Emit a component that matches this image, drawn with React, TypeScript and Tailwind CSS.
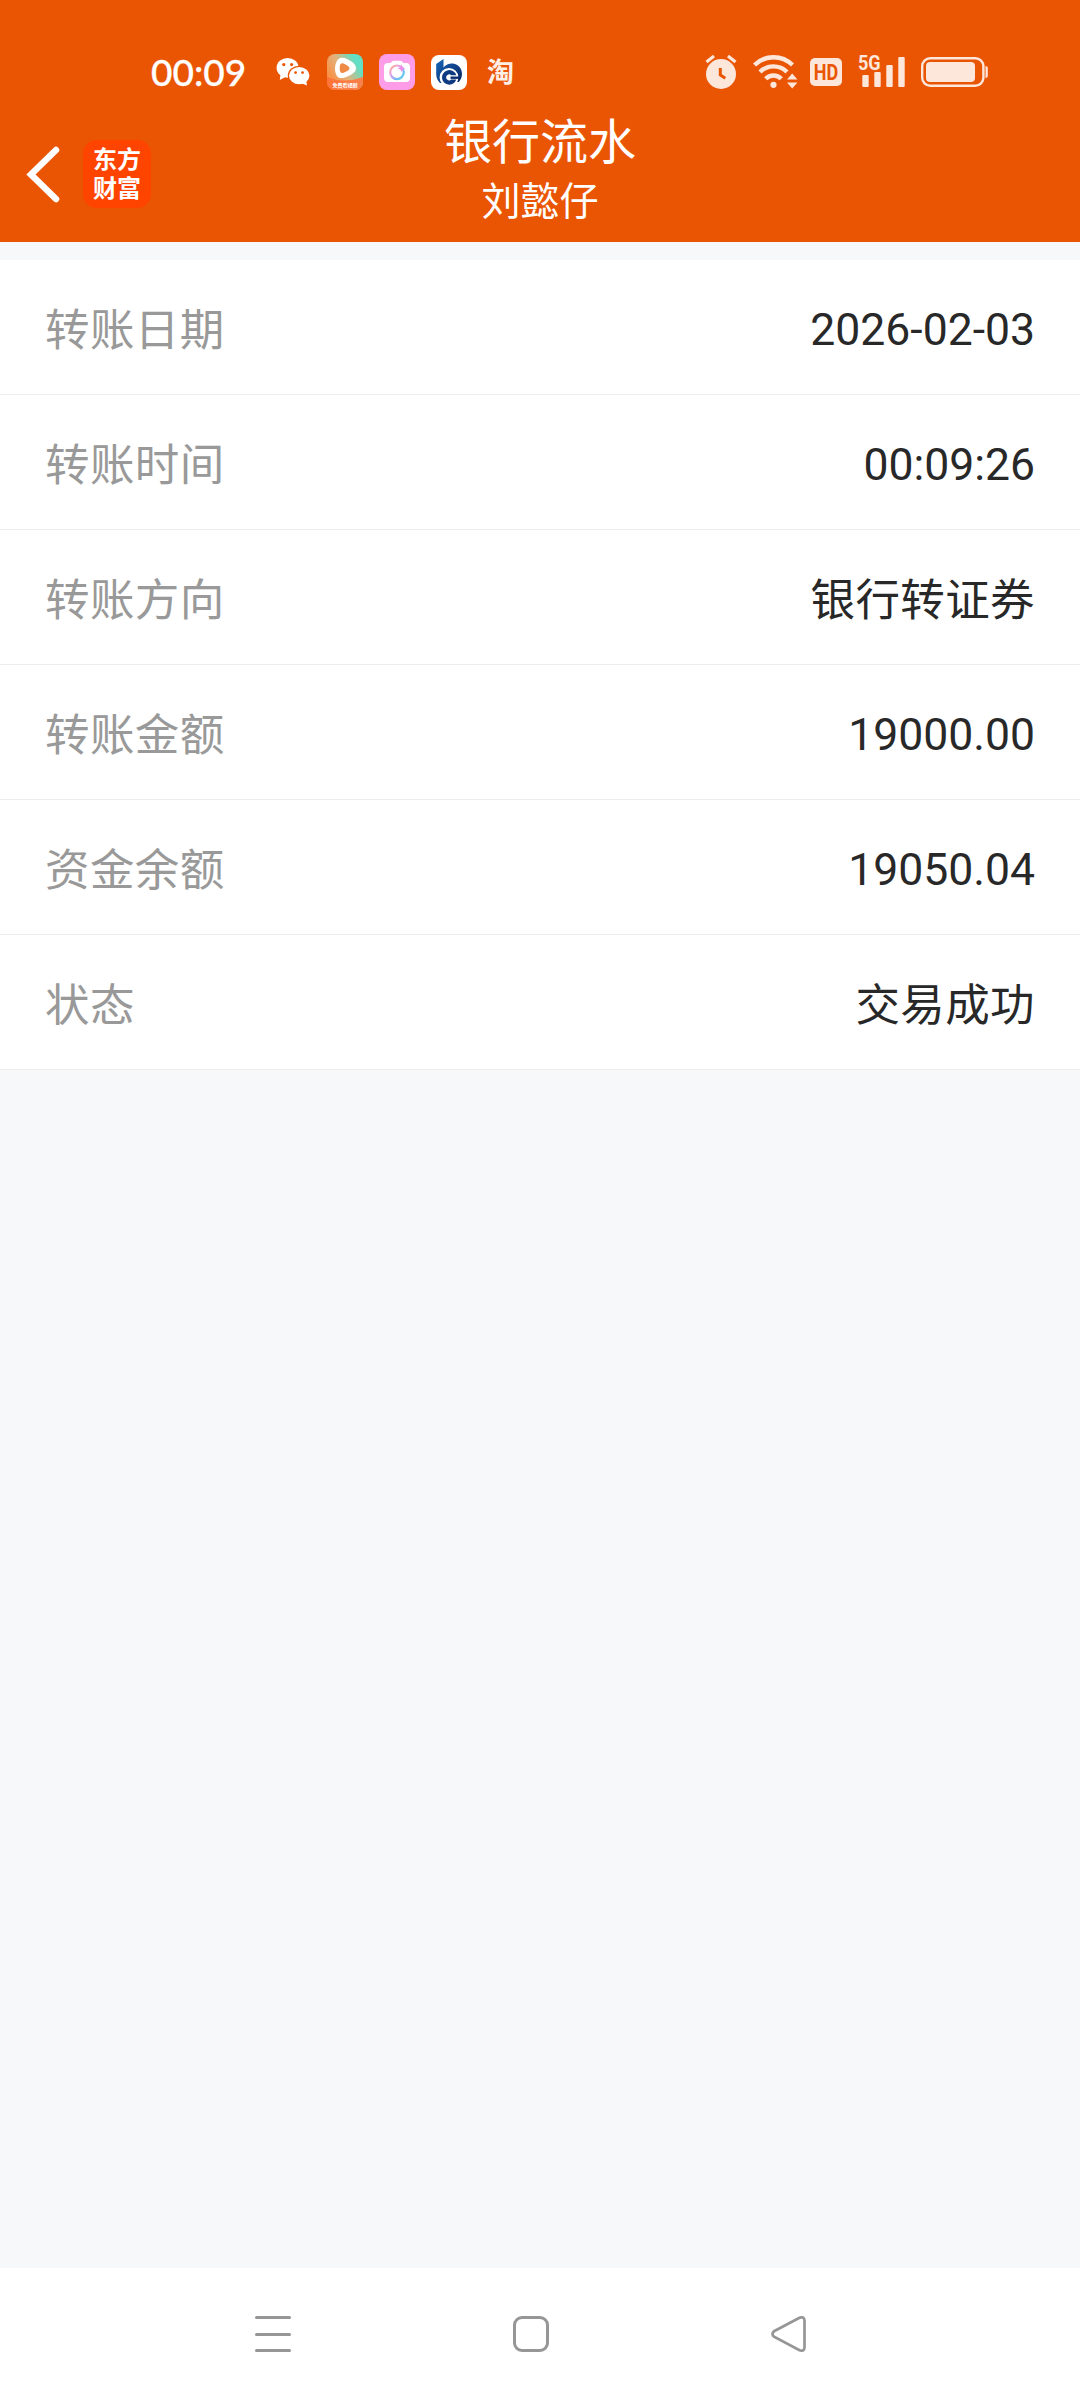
import type { ReactNode } from 'react'

const rows = [
  { label: '转账日期', value: '2026-02-03' },
  { label: '转账时间', value: '00:09:26' },
  { label: '转账方向', value: '银行转证券' },
  { label: '转账金额', value: '19000.00' },
  { label: '资金余额', value: '19050.04' },
  { label: '状态', value: '交易成功' },
]

function WechatIcon() {
  return (
    <svg width="34" height="30" viewBox="276 58 34 30" className="shrink-0">
      <path d="M280.500 75l-.7 6 6-3.200z" fill="#fff" />
      <ellipse cx="287.600" cy="68.800" rx="11" ry="9.900" fill="#fff" />
      <ellipse cx="299.200" cy="76.600" rx="11.400" ry="9.900" fill="#ea5504" />
      <path d="M301 84l6 2.400-.8-5z" fill="#fff" />
      <ellipse cx="299.200" cy="76.600" rx="10.200" ry="8.700" fill="#fff" />
      <g fill="#ea5504">
        <circle cx="283.800" cy="65.600" r="1.600" />
        <circle cx="291.600" cy="65.600" r="1.600" />
        <circle cx="295.600" cy="73.600" r="1.400" />
        <circle cx="302.600" cy="73.600" r="1.400" />
      </g>
    </svg>
  )
}

function VideoIcon() {
  return (
    <div className="relative h-9 w-9 shrink-0 overflow-hidden rounded-[8px]">
      <svg width="36" height="36" viewBox="0 0 36 36">
        <defs>
          <linearGradient id="videoBg" x1="0" y1="0.7" x2="1" y2="0.1">
            <stop offset="0" stopColor="#ff8a3c" />
            <stop offset="0.45" stopColor="#e2b27c" />
            <stop offset="0.8" stopColor="#62dfc4" />
          </linearGradient>
          <linearGradient id="videoFoot" x1="0" y1="0" x2="1" y2="0">
            <stop offset="0" stopColor="#ff7438" />
            <stop offset="1" stopColor="#f8804a" />
          </linearGradient>
        </defs>
        <rect width="36" height="36" fill="url(#videoBg)" />
        <path d="M0 23q18 7 36 0v13H0z" fill="url(#videoFoot)" />
        <path
          d="M10.500 6c2.500-3 6.500-2.500 10-.8 4.500 2.300 8.500 4.800 8.500 9 0 4-4 6-8 8-4.500 2.300-9.500 3-11.500-1-2.500-5-1.500-11.500 1-15.200z"
          fill="#fff"
        />
        <path
          d="M13.500 10c1-1.200 2.700-.9 4.500.2 2.500 1.500 4.700 2.600 4.500 4.400-.2 1.600-2.200 2.400-4.300 3.500-1.900 1-4 1.500-4.800 0-1-2-.9-6 .1-8.100z"
          fill="#ee8a45"
        />
      </svg>
      <span className="absolute inset-x-0 bottom-0.5 text-center text-[5px] leading-[6px] font-bold whitespace-nowrap text-white">
        免费看短剧
      </span>
    </div>
  )
}

function CameraIcon() {
  return (
    <svg width="36" height="36" viewBox="0 0 36 36" className="shrink-0">
      <defs>
        <linearGradient id="ring" x1="0" y1="0" x2="1" y2="1">
          <stop offset="0" stopColor="#ffb08a" />
          <stop offset="0.35" stopColor="#e9a0e8" />
          <stop offset="0.7" stopColor="#6fb6f5" />
          <stop offset="1" stopColor="#5fe0e0" />
        </linearGradient>
      </defs>
      <rect width="36" height="36" rx="8" fill="#fd9de8" />
      <path
        d="M9 9h2.500l1.500-1.500q.7-.7 1.700-.7h6.600q1 0 1.700.7L24.500 9H27q4 0 4 4v11q0 4-4 4H9q-4 0-4-4V13q0-4 4-4z"
        fill="#fff"
      />
      <circle cx="18" cy="18.300" r="6.800" fill="none" stroke="url(#ring)" strokeWidth="2.200" />
      <path d="M22.500 10.500l1.100 2.700 2.700 1.100-2.700 1.100-1.100 2.700-1.100-2.700-2.700-1.100 2.700-1.100z" fill="#f08ae6" />
    </svg>
  )
}

function BankIcon() {
  return (
    <svg width="36" height="36" viewBox="0 0 36 36" className="shrink-0">
      <defs>
        <linearGradient id="bank" x1="0" y1="0" x2="1" y2="1">
          <stop offset="0" stopColor="#1566b8" />
          <stop offset="1" stopColor="#0a2360" />
        </linearGradient>
      </defs>
      <rect y="1" width="36" height="35" rx="8" fill="#fff" />
      <path
        d="M5.200 10L12.500 5v8.500C15 10.500 18.500 9 22 9.500c5.500.8 9 5 9 10.500 0 3.200-1.200 5.800-3.200 8h-3.300L9 29c-2.500-2.500-3.800-5.500-3.800-9z"
        fill="url(#bank)"
      />
      <circle cx="18" cy="23.500" r="9.400" fill="#fff" />
      <path d="M25.300 21.200h-5a3 3 0 1 0 0 4.400h5a7.300 7.300 0 1 1 0-4.400z" fill="#0d3a80" />
      <path d="M19.500 22.500h10.500v2.400H19.500z" fill="#0d2c6e" />
    </svg>
  )
}

function AlarmIcon() {
  return (
    <svg width="32" height="36" viewBox="705 54 32 36" className="shrink-0">
      <circle cx="721" cy="74" r="15" fill="#fde6da" />
      <path d="M706.500 62l7.500-6M735.500 62l-7.500-6" stroke="#fde6da" strokeWidth="3.200" />
      <path d="M720.300 68v7l5 3.300" fill="none" stroke="#ea5504" strokeWidth="3" />
    </svg>
  )
}

function WifiIcon() {
  return (
    <svg width="45" height="36" viewBox="753 54 45 36" className="shrink-0">
      <g fill="none" stroke="#fde6da" strokeWidth="4.400">
        <path d="M754.500 65a27 27 0 0 1 38 0" />
        <path d="M760 72a19 19 0 0 1 27 0" />
        <path d="M765.700 78.800a11 11 0 0 1 15.600 0" />
      </g>
      <circle cx="773.500" cy="84.800" r="3.100" fill="#fde6da" />
      <path d="M787 79.500l5.200-6 5.200 6zM787 82.500l5.200 6 5.200-6z" fill="#fde6da" />
    </svg>
  )
}

function SignalIcon() {
  return (
    <div className="relative h-9 w-[46px] shrink-0">
      <svg width="46" height="36" viewBox="859 54 46 36">
        <g fill="#fde6da">
          <rect x="862.300" y="75" width="6.400" height="12" rx="1" />
          <rect x="874.300" y="72" width="6.400" height="15" rx="1" />
          <rect x="886.300" y="65" width="6.400" height="22" rx="1" />
          <rect x="898.300" y="57" width="6.400" height="30" rx="1" />
        </g>
      </svg>
      <span className="absolute -top-px -left-px origin-left scale-x-[0.86] font-[Roboto] text-[21px] leading-5 font-bold text-[#fde6da]">
        5G
      </span>
    </div>
  )
}

function BatteryIcon() {
  return (
    <svg width="68" height="32" viewBox="921 56 68 32" className="shrink-0">
      <rect x="922.200" y="58.200" width="61.200" height="27.600" rx="8" fill="none" stroke="#fde6da" strokeWidth="2.400" />
      <rect x="926" y="62" width="49" height="20" rx="4" fill="#fde6da" />
      <path d="M985.500 66q2.300 0 2.300 2v8q0 2-2.300 2z" fill="#fde6da" />
    </svg>
  )
}

function StatusBar() {
  return (
    <div className="flex h-[106px] items-center justify-between pt-[38px] pr-[91px] pl-[151px]">
      <div className="flex items-center">
        <span className="w-[125px] font-[Lato] text-[37px] leading-9 font-medium text-white [-webkit-text-stroke:0.3px_#fff]">
          00:09
        </span>
        <WechatIcon />
        <div className="ml-[17px] flex gap-4">
          <VideoIcon />
          <CameraIcon />
          <BankIcon />
        </div>
        <span className="ml-5 pt-0.5 text-[27px] leading-9 font-bold text-[#fff0e6]">淘</span>
      </div>
      <div className="flex items-center">
        <AlarmIcon />
        <div className="ml-4">
          <WifiIcon />
        </div>
        <span className="ml-3 flex h-7 w-8 items-center justify-center rounded-[5px] bg-[#fde6da] font-[Roboto] text-[22px] font-bold text-[#ea5504]">
          <span className="scale-x-[0.82]">HD</span>
        </span>
        <div className="mr-4 ml-[17px]">
          <SignalIcon />
        </div>
        <BatteryIcon />
      </div>
    </div>
  )
}

function TitleBar() {
  return (
    <div className="grid h-[136px] grid-cols-3">
      <div className="flex items-start pt-[34px] pl-[26px]">
        <svg width="34" height="68" viewBox="26 140 34 68" className="shrink-0">
          <path d="M56 150L31 174.500 56 199" fill="none" stroke="#fff" strokeWidth="6.500" strokeLinecap="round" />
        </svg>
        <div className="ml-[23px] flex h-[68px] w-[68px] flex-col items-center justify-center rounded-[14px] bg-[#ff4400] pt-0.5 text-[24px] leading-[29px] font-bold text-white">
          <span>东方</span>
          <span>财富</span>
        </div>
      </div>
      <div className="flex flex-col items-center pt-[7px] text-white">
        <h1 className="text-[48px] leading-[60px]">银行流水</h1>
        <p className="text-[39px] leading-[58px]">刘懿仔</p>
      </div>
    </div>
  )
}

function Row({ label, children }: { label: string; children: ReactNode }) {
  return (
    <div className="flex h-[135px] items-center justify-between border-b border-[#ededed] px-[45px] text-[44.5px]">
      <span className="pt-2 tracking-[0.4px] text-[#999]">{label}</span>
      <span className="text-[#282828]">{children}</span>
    </div>
  )
}

function NavBar() {
  return (
    <nav className="flex h-[132px] items-center justify-between bg-white pr-[273px] pl-[255px]">
      <div className="flex h-9 w-9 flex-col justify-between">
        <span className="h-[3px] rounded-sm bg-[#969696]" />
        <span className="h-[3px] rounded-sm bg-[#969696]" />
        <span className="h-[3px] rounded-sm bg-[#969696]" />
      </div>
      <div className="h-9 w-9 rounded-[9px] border-3 border-[#969696]" />
      <svg width="36" height="36" viewBox="0 0 36 36">
        <path
          d="M3 15.300L28.500 1.800q5-1.800 5 3v26.400q0 4.800-5 3L3 20.700q-3-2.700 0-5.400z"
          fill="none"
          stroke="#969696"
          strokeWidth="2.700"
        />
      </svg>
    </nav>
  )
}

export default function App() {
  return (
    <div className="flex h-[2400px] w-[1080px] flex-col bg-[#f7f8fa] font-[Roboto,'Noto_Sans_CJK_SC',sans-serif]">
      <header className="bg-[#ea5504]">
        <StatusBar />
        <TitleBar />
      </header>
      <main className="mt-[18px] flex-1">
        <div className="bg-white">
          {rows.map((row) => (
            <Row key={row.label} label={row.label}>
              {/\d/.test(row.value) ? (
                <span className="relative top-[3px]">{row.value}</span>
              ) : (
                <span className="relative top-1 tracking-[0.4px]">{row.value}</span>
              )}
            </Row>
          ))}
        </div>
      </main>
      <NavBar />
    </div>
  )
}
